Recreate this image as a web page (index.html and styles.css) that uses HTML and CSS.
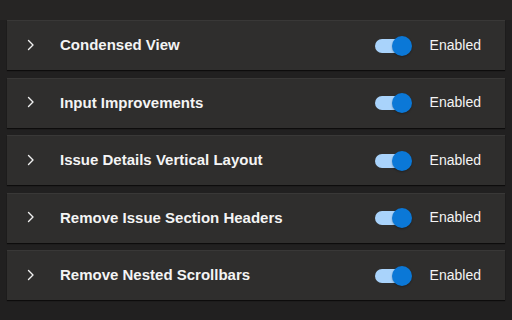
FILE: index.html
```html
<!DOCTYPE html>
<html>

<head>
    <meta charset="UTF-8">
    <title>Features</title>
    <link rel="stylesheet" href="styles.css">
</head>

<body>
    <div class="top-band"></div>

    <div class="feature-list">
        <div class="feature">
            <svg class="chevron" width="8" height="12" viewBox="0 0 8 12"><path d="M1.5 1.5L6 6L1.5 10.5" /></svg>
            <div class="feature-name">Condensed View</div>
            <div class="switch"><div class="switch-track"></div><div class="switch-knob"></div></div>
            <div class="feature-state">Enabled</div>
        </div>
        <div class="feature">
            <svg class="chevron" width="8" height="12" viewBox="0 0 8 12"><path d="M1.5 1.5L6 6L1.5 10.5" /></svg>
            <div class="feature-name">Input Improvements</div>
            <div class="switch"><div class="switch-track"></div><div class="switch-knob"></div></div>
            <div class="feature-state">Enabled</div>
        </div>
        <div class="feature">
            <svg class="chevron" width="8" height="12" viewBox="0 0 8 12"><path d="M1.5 1.5L6 6L1.5 10.5" /></svg>
            <div class="feature-name">Issue Details Vertical Layout</div>
            <div class="switch"><div class="switch-track"></div><div class="switch-knob"></div></div>
            <div class="feature-state">Enabled</div>
        </div>
        <div class="feature">
            <svg class="chevron" width="8" height="12" viewBox="0 0 8 12"><path d="M1.5 1.5L6 6L1.5 10.5" /></svg>
            <div class="feature-name">Remove Issue Section Headers</div>
            <div class="switch"><div class="switch-track"></div><div class="switch-knob"></div></div>
            <div class="feature-state">Enabled</div>
        </div>
        <div class="feature">
            <svg class="chevron" width="8" height="12" viewBox="0 0 8 12"><path d="M1.5 1.5L6 6L1.5 10.5" /></svg>
            <div class="feature-name">Remove Nested Scrollbars</div>
            <div class="switch"><div class="switch-track"></div><div class="switch-knob"></div></div>
            <div class="feature-state">Enabled</div>
        </div>
    </div>
</body>

</html>
```

FILE: styles.css
```css
* { padding: 0px; margin: 0px; box-sizing: border-box; }

body { background-color: #212020; font-family: "Liberation Sans", Arial, sans-serif; color: #f4f4f4; overflow: hidden; }

.top-band { height: 20px; background-color: #262524; }

.feature-list { padding: 0px 7px; }

.feature { display: flex; align-items: center; height: 50px; margin-bottom: 7.5px; padding: 0px 24px 0px 20px; background-color: #2f2e2d; border-top: 1px solid #393837; box-shadow: 0px 1px 1px rgba(0, 0, 0, 0.6); }

.chevron { flex: none; margin-right: 25px; margin-bottom: 2px; }
.chevron path { fill: none; stroke: #f0f0f0; stroke-width: 1.4; stroke-linecap: round; stroke-linejoin: round; }

.feature-name { font-size: 15px; font-weight: bold; margin-bottom: 2px; }

.switch { position: relative; width: 37px; height: 20px; margin-left: auto; }
.switch-track { position: absolute; left: 0px; top: 3px; width: 34px; height: 14px; border-radius: 7px; background-color: #a9d3fb; }
.switch-knob { position: absolute; right: 0px; top: 0px; width: 20px; height: 20px; border-radius: 50%; background-color: #0b78d7; box-shadow: 0px 1px 2px rgba(0, 0, 0, 0.3); }

.feature-state { margin-left: 18px; font-size: 14px; margin-bottom: 2px; }
```
